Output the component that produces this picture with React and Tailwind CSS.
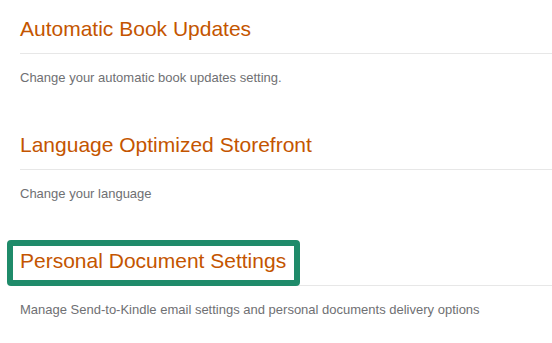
import React from 'react'

const sections = [
  { title: 'Automatic Book Updates', desc: 'Change your automatic book updates setting.' },
  { title: 'Language Optimized Storefront', desc: 'Change your language' },
  { title: 'Personal Document Settings', desc: 'Manage Send-to-Kindle email settings and personal documents delivery options', highlight: true },
]

export default function App() {
  return (
    <div className="w-[552px] h-[343px] overflow-hidden bg-white pl-5 pt-[15px] font-['Liberation_Sans',Arial,sans-serif]">
      <div className="flex flex-col gap-[43px]">
        {sections.map(s => (
          <section key={s.title}>
            <div className="relative border-b border-[#e7e7e7] pb-[10px]">
              <h2 className="text-[21px] leading-[28px] font-normal text-[#c45500]">{s.title}</h2>
              {s.highlight && (
                <div className="absolute left-[-13px] top-[-7px] w-[293px] h-[46px] rounded-[4px] border-[6px] border-[#1f8b6a] bg-transparent" />
              )}
            </div>
            <p className="mt-[14px] text-[13px] leading-5 text-[#6f7073]">{s.desc}</p>
          </section>
        ))}
      </div>
    </div>
  )
}
